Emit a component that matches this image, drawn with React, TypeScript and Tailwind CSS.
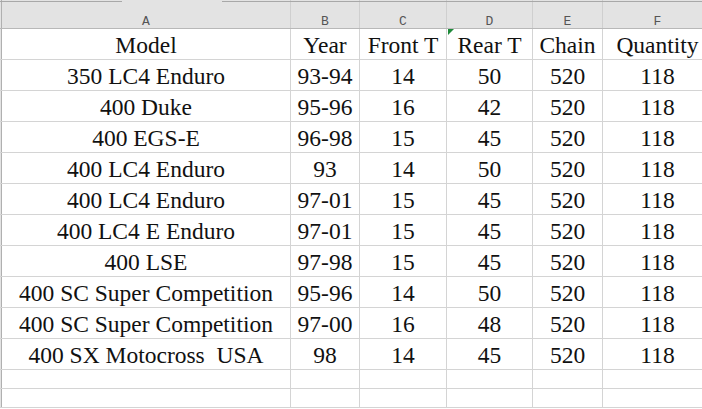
const columns = [
  { letter: 'A', width: 'w-[289px]' },
  { letter: 'B', width: 'w-[69px]' },
  { letter: 'C', width: 'w-[87px]' },
  { letter: 'D', width: 'w-[86px]' },
  { letter: 'E', width: 'w-[70px]' },
  { letter: 'F', width: 'w-[110px]' },
];

const rows: string[][] = [
  ['Model', 'Year', 'Front T', 'Rear T', 'Chain', 'Quantity'],
  ['350 LC4 Enduro', '93-94', '14', '50', '520', '118'],
  ['400 Duke', '95-96', '16', '42', '520', '118'],
  ['400 EGS-E', '96-98', '15', '45', '520', '118'],
  ['400 LC4 Enduro', '93', '14', '50', '520', '118'],
  ['400 LC4 Enduro', '97-01', '15', '45', '520', '118'],
  ['400 LC4 E Enduro', '97-01', '15', '45', '520', '118'],
  ['400 LSE', '97-98', '15', '45', '520', '118'],
  ['400 SC Super Competition', '95-96', '14', '50', '520', '118'],
  ['400 SC Super Competition', '97-00', '16', '48', '520', '118'],
  ['400 SX Motocross\u00a0\u00a0USA', '98', '14', '45', '520', '118'],
];

export default function App() {
  return (
    <div className="relative h-[409px] w-[702px] overflow-hidden bg-white text-[#111] [font-family:Liberation_Serif,serif]">
      {/* Column letters */}
      <div className="flex h-[29px] border-b border-[#b8b8b8] bg-[#e3e3e3]">
        <div className="w-[2px] shrink-0 border-r border-[#b0b0b0]" />
        {columns.map(col => (
          <div
            key={col.letter}
            className={`${col.width} flex shrink-0 items-end justify-center border-r border-[#cfcfcf] pb-0 text-[13px] leading-[13px] text-[#555] [font-family:Liberation_Mono,monospace]`}
          >
            {col.letter}
          </div>
        ))}
      </div>

      {/* Sheet tab edge */}
      <div className="absolute left-0 top-0 flex h-[2px] w-full">
        <div className="w-[122px] border-b border-[#a8a8a8]" />
        <div className="w-[100px]" />
        <div className="flex-1 border-b border-[#a8a8a8]" />
      </div>

      {/* Comment marker on D1 */}
      <div className="absolute left-[448px] top-[29px] h-0 w-0 border-r-[6px] border-t-[6px] border-r-transparent border-t-[#1e8a3a]" />

      {rows.map((row, i) => (
        <div key={i} className="flex h-[31px] border-b border-[#d4d4d4]">
          <div className="w-[2px] shrink-0 border-r border-[#b0b0b0] bg-[#e3e3e3]" />
          {row.map((cell, j) => (
            <div
              key={j}
              className={`${columns[j].width} flex shrink-0 items-end justify-center whitespace-pre border-r border-[#d4d4d4] text-[23.5px] leading-[28px]`}
            >
              {cell}
            </div>
          ))}
        </div>
      ))}

      {[0, 1].map(i => (
        <div key={`e${i}`} className="flex h-[19px] border-b border-[#d4d4d4]">
          <div className="w-[2px] shrink-0 border-r border-[#b0b0b0] bg-[#e3e3e3]" />
          {columns.map(col => (
            <div key={col.letter} className={`${col.width} shrink-0 border-r border-[#d4d4d4]`} />
          ))}
        </div>
      ))}
    </div>
  );
}
